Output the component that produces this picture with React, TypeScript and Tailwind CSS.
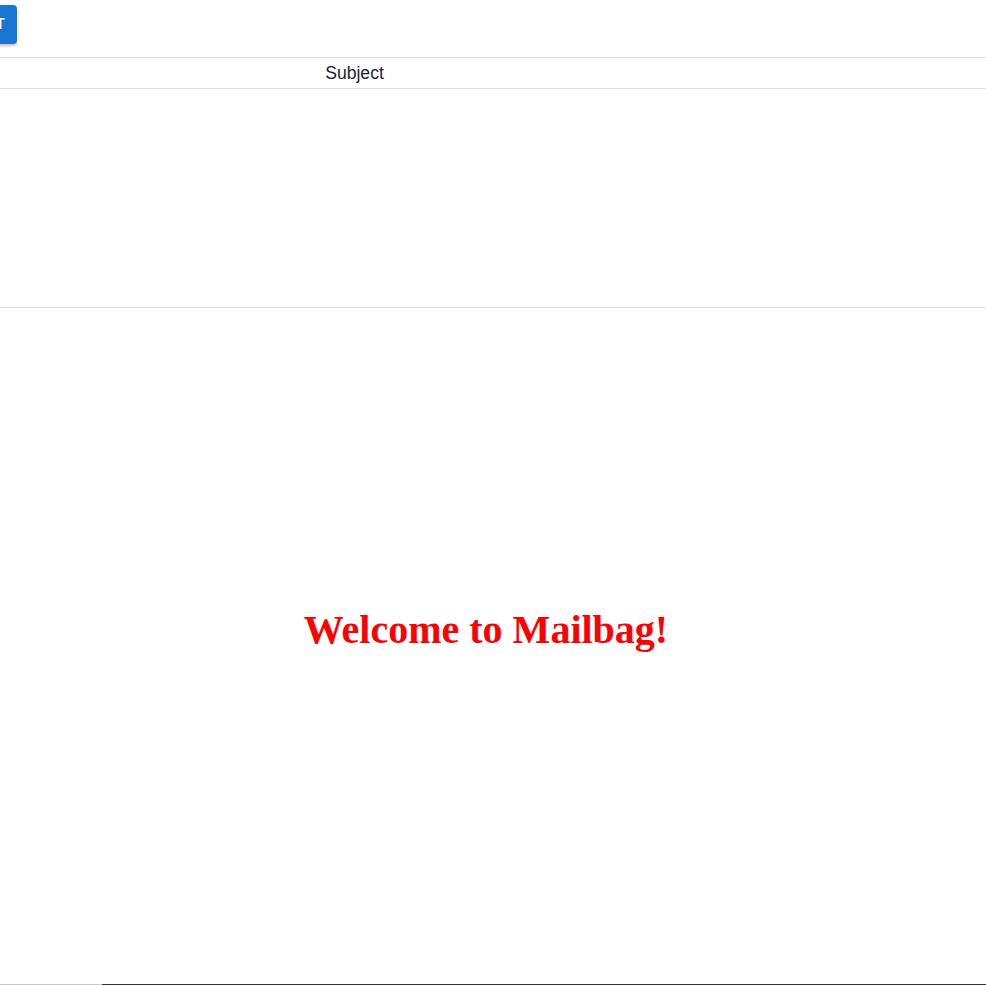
export default function App() {
  return (
    <div className="relative flex h-[985px] w-[986px] flex-col overflow-hidden bg-white">
      {/* Toolbar */}
      <div className="flex h-[58px] items-start border-b border-[#e0e0e0] pt-[5px]">
        <button className="ml-[-24px] flex h-[39px] w-[41px] items-center justify-end rounded-[4px] bg-[#1976d2] pr-[12px] font-['Roboto',sans-serif] text-[15px] font-medium text-white shadow-[0_2px_3px_rgba(0,0,0,0.25)]">
          T
        </button>
      </div>

      {/* Message list header */}
      <div className="flex h-[31px] items-center border-b border-[#e0e0e0] pt-[1px]">
        <div className="w-[709px] text-center font-['Liberation_Sans',Arial,sans-serif] text-[17.6px] text-[#1e1e2a]">
          Subject
        </div>
      </div>

      {/* Message list body */}
      <div className="h-[219px] border-b border-[#e0e0e0]" />

      {/* Content */}
      <div className="flex-1 pr-[14px] pt-[292px] text-center">
        <h1 className="font-['Liberation_Serif','Times_New_Roman',serif] text-[40px] font-bold text-[#ff0000]">
          Welcome to Mailbag!
        </h1>
      </div>

      {/* Bottom edge */}
      <div className="flex h-px">
        <div className="w-[102px] bg-[#c8c8c8]" />
        <div className="flex-1 bg-[#333333]" />
      </div>
    </div>
  );
}
